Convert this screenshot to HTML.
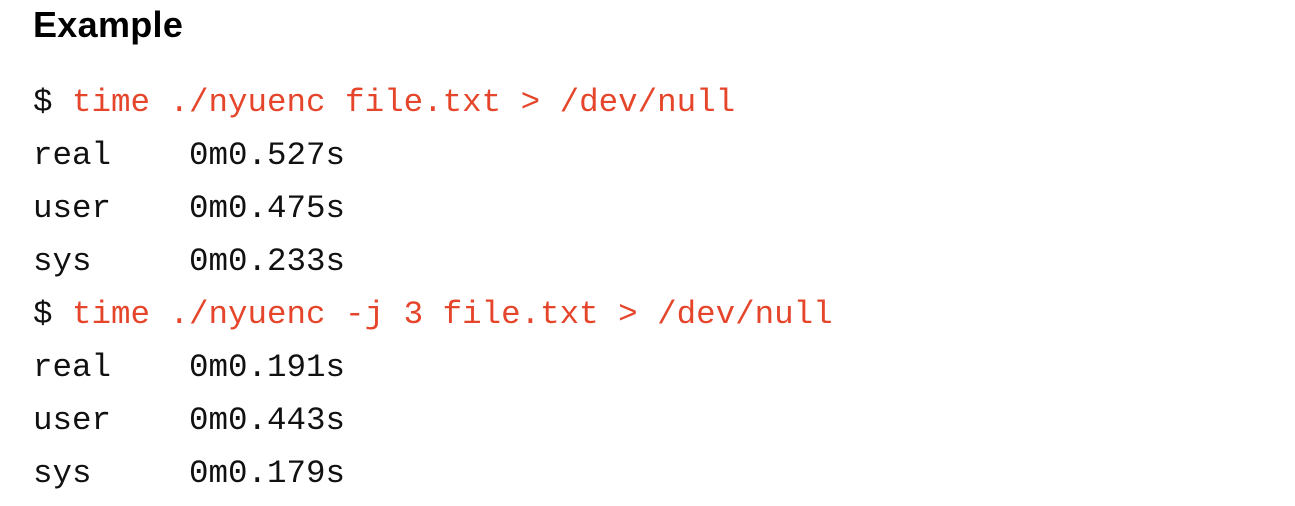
<!DOCTYPE html>
<html><head><style>
body{margin:0;width:1295px;height:506px;background:#fff;overflow:hidden;position:relative}
.t{position:absolute;left:33px;top:4px;font:bold 36px "Liberation Sans",sans-serif;color:#000;letter-spacing:0.3px}
.c{position:absolute;left:33px;top:76px;font:32.5px/53px "Liberation Mono",monospace;color:#111;white-space:pre}
.r{color:#e5452a}
</style></head><body>
<div class="t">Example</div>
<div class="c">$ <span class="r">time ./nyuenc file.txt &gt; /dev/null</span>
real    0m0.527s
user    0m0.475s
sys     0m0.233s
$ <span class="r">time ./nyuenc -j 3 file.txt &gt; /dev/null</span>
real    0m0.191s
user    0m0.443s
sys     0m0.179s</div>
</body></html>
